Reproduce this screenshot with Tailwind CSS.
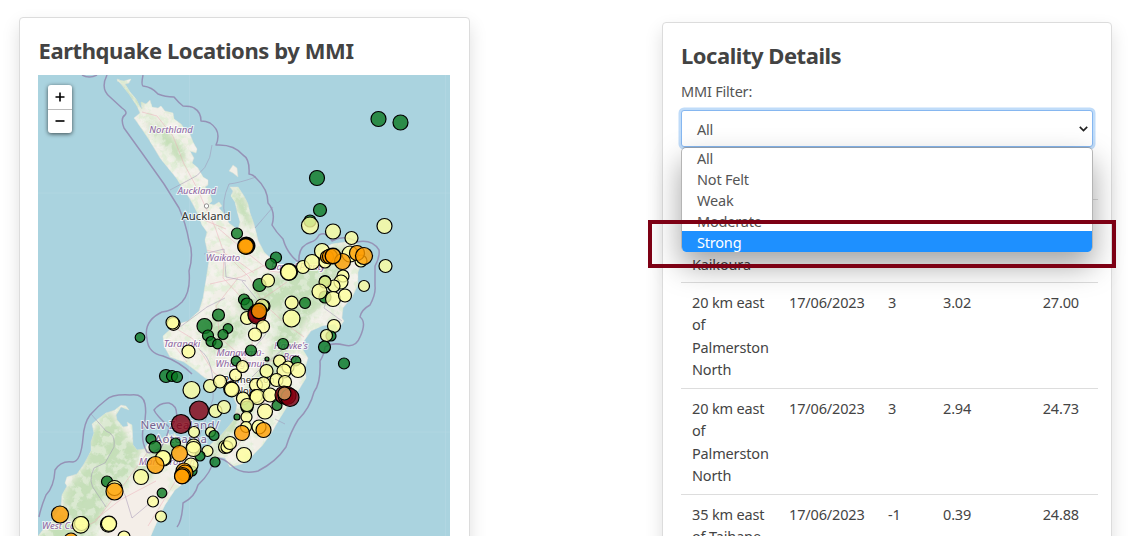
<!DOCTYPE html>
<html lang="en">
<head>
<meta charset="utf-8">
<title>Earthquake Dashboard</title>
<script src="https://cdn.jsdelivr.net/npm/@tailwindcss/browser@4"></script>
</head>
<body class="relative h-[536px] overflow-hidden bg-white font-['Noto_Sans',sans-serif] text-[#444]">
<main class="flex h-[536px] justify-between overflow-hidden pl-[19px] pr-[29px]">
  <section class="mt-[17px] h-[640px] w-[451px] shrink-0 rounded-[4px] border border-[#dcdcdc] bg-white px-[18px] shadow-[0_8px_18px_rgba(0,0,0,0.13)]">
    <h2 class="mt-[16px] h-[41px] whitespace-nowrap pl-[0.5px] text-[22px] font-bold leading-[32px] tracking-[-0.42px] text-[#434343]">Earthquake Locations by MMI</h2>
    <div class="relative h-[480px] w-[412px] overflow-hidden bg-[#aad3df]">
      <svg id="map" class="block h-[480px] w-[412px]" viewBox="38 75 412 480">
        <defs>
          <clipPath id="land"><use href="#north"/><use href="#south"/></clipPath>
          <filter id="soft" x="-20%" y="-20%" width="140%" height="140%"><feGaussianBlur stdDeviation="3"/></filter>
          <filter id="forest" x="0" y="0" width="100%" height="100%">
            <feTurbulence type="fractalNoise" baseFrequency="0.13" numOctaves="4" seed="8"/>
            <feColorMatrix values="0 0 0 0 .71  0 0 0 0 .85  0 0 0 0 .64  7 0 0 0 -3.3"/>
          </filter>
          <filter id="clearing" x="0" y="0" width="100%" height="100%">
            <feTurbulence type="fractalNoise" baseFrequency="0.11" numOctaves="4" seed="21"/>
            <feColorMatrix values="0 0 0 0 .945  0 0 0 0 .937  0 0 0 0 .91  7 0 0 0 -3.3"/>
          </filter>
        </defs>
        <rect x="38" y="75" width="412" height="480" fill="#aad3df"/>
        <path d="M189.5 75V536M38 193H450M445.500 75V536M38 432H450" stroke="#b5d9e4" stroke-width=".6"/>
        <g fill="#f1efe7" stroke="#d5dfd5" stroke-width=".5">
          <path id="north" d="M117 80L124 81L131 79L129 83L125 84L130 92L136 99L140 107L142 109L141 102L146 104L150 100L152 107L158 108L161 106L165 111L173 113L174 119L181 124L186 131L190 134L193 142L197 149L196 153L190 151L194 158L192 163L198 168L203 177L208 180L208 185L205 187L210 194L212 201L209 204L214 205L219 202L222 206L219 208L225 215L229 223L238 230L240 222L237 211L235 202L231 196L233 191L230 187L238 187L244 196L248 204L250 213L254 224L258 240L264 252L275 262L290 269L305 262L315 254L326 247L332 244L345 242L355 243L366 250L362 262L358 272L358 285L352 297L343 308L342 318L344 321L338 329L335 324L322 326L311 331L304 341L303 350L308 358L305 368L306 378L300 388L290 402L280 418L272 432L262 446L250 458L242 464L230 467L225 458L218 457L214 460L208 452L210 445L222 434L234 420L237 405L232 394L220 385L205 378L195 370L184 362L170 357L164 346L163 336L175 325L188 321L199 311L203 298L206 280L209 260L205 240L207 232L202 225L198 214L190 199L180 184L177 179L160 158L148 138L137 122L134 118L140 113L137 106L129 94L121 84Z"/>
          <path id="south" d="M121 405L115 410L106 413L98 419L92 424L94 433L91 442L91 451L84 464L77 474L67 477L65 483L67 486L62 495L61 507L52 521L43 530L38 536V560H144L150 538L156 524L165 505L175 490L188 480L195 470L199 455L190 445L179 439L174 433L173 440L168 433L165 441L159 436L151 440L144 449L137 450L133 445L132 425L127 422L128 426L123 427L117 420L116 415L121 407L129 410L126 406Z"/>
          <path d="M233 165l4 3l1 9l-5-4l-4-2zM117 79l3 1-2 2z"/>
        </g>
        <g clip-path="url(#land)">
          <rect x="38" y="75" width="412" height="480" filter="url(#forest)" opacity=".6"/>
          <g fill="#bfdcb2" filter="url(#soft)" opacity=".85">
            <path d="M122 82l24 24l-8 3l-19-22zM148 118l18 12l22 25l-8 10l-29-34zM232 188l12 7l10 33l-9-3-10-21z"/>
            <path d="M358 244l-18 28l-10 28l-23 20l-24 38l-14-2l11-50l-30 18l-15-20l28-25l23-4l29-23z"/>
            <path d="M215 315l29 5l2 15l-30 20l-16-15zM303 330l-23 45l-45 55l-23 33l-9-7l34-44l25-46z"/>
            <path d="M109 410l-18 23l-7 35l-17 18l-3 22l-24 28v24l50-20l17-36l28-33l6-20-18-20z"/>
            <path d="M190 442l-31 24l-14 17l-10-5l24-38z"/>
          </g>
          <rect x="38" y="75" width="412" height="480" filter="url(#clearing)" opacity=".4"/>
          <path fill="#f4eee8" filter="url(#soft)" d="M111 500l30-15l31-14-24 75h-45z"/>
          <g fill="none" stroke="#eba4b1" stroke-width=".65" opacity=".65">
            <path d="M142 112l15 4l16 20l11 28l13 24l8 18l10 21l9 26l-1 25l18 19l12 18l-1 34l-17 21l-14 17l3 24l19 3l-8 30"/>
            <path d="M218 228l28 24l24 19l21 3l29-13l29-9M224 252l25 25l14 26l24 22l17 12M206 250l25 6l23 17M210 284l31-7l28-14M172 326l21 13l21 34l27 16l23 4l22-18M255 304l32-22M270 390l-14 31l-22 29M198 446l-20 31l-30 49M150 449l-28 38l-26 34l-38 21M95 520l25-20l36-19"/>
            <path d="M204 220l22 9M238 278l-22 28l4 32l30 25l40-4M170 340l17 22"/>
          </g>
        </g>
        <g fill="none" stroke="#9183ad" stroke-width="1.500" opacity=".8" stroke-linejoin="round">
          <path d="M82 75q7 4 15 0M107 75q-7 14 3 22l12 11q6 4 3 7q-5 3-1 13l18 25l22 31l15 24q7 16 10 33q5 13 0 30q2 21-7 31q-9 9-20 10q-19 9-15 27q1 14 16 17q17 6 29 18"/>
          <path d="M143 75q-2 10 0 11q9 1 15 8q7 3 16 3q5 6 9 9q8 0 11 2q7 4 7 13q5 0 9 2q12 8 6 22q18-1 27 10q7 4 6 19q5 1 7 4q12 11 12 25q8 9 4 22q4 7 11 14q4 14 14 22h2q-1-15 12-19q5-1 8-7q8-4 13 6q12-7 25 1q15-3 22 8q1 7-4 16v20q1 8-5 19q-9 5-10 12q7 5 0 20q-4 11-16 8q-12-3-19 2q-1 8-5 14q1 22-6 31q-4 16-16 28q-7 11-12 27q-10 15-28 24q-17 4-27-6q-8-8-17-7q-2 14-16 27q-3 12-15 18q-1 18-6 24"/>
          <path d="M130 395q13-2 15 9q2 12-2 25q-2 13 4 23q4 3 14-5q7-11 8-20q-13-12-15-17q6-8 15-7q10 3 7 18M130 395q-18-1-24 5q-8 6-16 15q-6 8-7 23q-2 23-10 24q-12-2-18 8q-1 17-9 25q-5 12-7 22"/>
        </g>
        <g fill="none" stroke="#9b8db0" stroke-width=".8" opacity=".6">
          <path d="M170 190l17-9q23-9 25-36M225 215q-4-13 4-31q10-1 27-7M255 228l18-21M204 254l20-5l2 28l20 4M242 281l17 21l7 32l-12 14M91 414l15 17q10 3 8 16l-9 16l-11 5q-7 14 2 24l10 15M110 477q9 7 15 18l7 23l12-10l17-15M180 327l27-20l18-9M282 350l-20 17l-18 18M330 290l-6 18l18 13M275 419l10 5M200 350q15 10 13 49l-17 47"/>
        </g>
        <g font-family="Noto Sans, sans-serif" text-anchor="middle" stroke="#fff" stroke-opacity=".7" stroke-width="2" paint-order="stroke" fill="#8c63a0">
          <g font-size="9.500" font-style="italic">
            <text x="171" y="132.500">Northland</text>
            <text x="197" y="193.500">Auckland</text>
            <text x="223" y="260.500">Waikato</text>
            <text x="298" y="270">Bay of Plenty</text>
            <text x="182" y="347">Taranaki</text>
            <text x="240.500" y="356">Manawatū-</text>
            <text x="240" y="367">Whanganui</text>
            <text x="291" y="349">Hawke's</text>
            <text x="291" y="360">Bay</text>
            <text x="167" y="465">Marlborough</text>
            <text x="65" y="529">West Coast</text>
          </g>
          <g font-size="11.500" fill="#756390" letter-spacing=".4">
            <text x="180" y="429">New Zealand/</text>
            <text x="181" y="443">Aotearoa</text>
          </g>
          <g fill="#333">
            <text x="206" y="220" font-size="11.300">Auckland</text>
            <text x="249" y="383" font-size="9.500">Palmerston</text>
            <text x="249" y="394" font-size="9.500">North</text>
          </g>
        </g>
        <circle cx="206.500" cy="206" r="2.200" fill="#fff" stroke="#777" stroke-width=".8"/>
        <g id="quakes" stroke="#000" stroke-width="1.200"></g>
      </svg>
      <div class="absolute left-[10px] top-[10px] flex h-[48px] w-[24px] flex-col divide-y divide-[#bbb] rounded-[3px] bg-white text-black shadow-[0_1px_4px_rgba(0,0,0,0.65)]">
        <button class="flex flex-1 items-center justify-center" aria-label="Zoom in"><svg class="size-[10px]" viewBox="0 0 10 10"><path d="M5 .5v9M.5 5h9" stroke="#000" stroke-width="1.600"/></svg></button>
        <button class="flex flex-1 items-center justify-center" aria-label="Zoom out"><svg class="size-[10px]" viewBox="0 0 10 10"><path d="M.5 5h9" stroke="#000" stroke-width="1.600"/></svg></button>
      </div>
    </div>
  </section>

  <section class="mt-[22px] h-[640px] w-[450px] shrink-0 rounded-[4px] border border-[#dcdcdc] bg-white pl-[18px] pr-[12px] shadow-[0_8px_18px_rgba(0,0,0,0.13)]">
    <h2 class="mt-[16px] h-[33px] whitespace-nowrap text-[22px] font-bold leading-[32px] tracking-[-0.47px] text-[#434343]">Locality Details</h2>
    <div class="mt-[8px] h-[23px] text-[14.5px] leading-[22px] tracking-[-0.2px] text-[#555]">MMI Filter:</div>
    <div class="relative mt-[7px] h-[37px] w-[412px]">
      <div class="flex h-[37px] items-center justify-between rounded-[3px] border border-[#86b7f0] bg-white pl-[15px] pr-[4px] text-[14.5px] tracking-[-0.2px] text-[#555] shadow-[0_0_0_2.5px_#c0dcf9]">
        <span class="pt-[2px]">All</span>
        <svg class="h-[6px] w-[9px]" viewBox="0 0 9 6"><path d="M.8.8L4.500 4.500L8.200.8" fill="none" stroke="#222" stroke-width="1.700"/></svg>
      </div>
      <ul class="absolute left-0 top-[37px] z-10 h-[105px] w-[412px] overflow-hidden rounded-[5px] border border-b-0 border-[#b5b5b5] border-t-[#8d9bab] bg-white text-[14.5px] tracking-[-0.2px] text-[#555]">
        <li class="h-[21px] pl-[15px] leading-[20px]">All</li>
        <li class="h-[21px] pl-[15px] leading-[20px]">Not Felt</li>
        <li class="h-[21px] pl-[15px] leading-[20px]">Weak</li>
        <li class="h-[20px] pl-[15px] leading-[20px]">Moderate</li>
        <li class="h-[22px] bg-[#1e90ff] pl-[15px] leading-[22px] text-white">Strong</li>
      </ul>
      <div class="absolute left-0 top-[37px] z-[9] h-[105px] w-[412px] rounded-[5px] shadow-[0_14px_30px_rgba(0,0,0,0.36)]"></div>
    </div>
    <table class="mt-[52px] w-[417px] table-fixed border-collapse text-[14.5px] leading-[22.4px] tracking-[-0.16px] text-[#444]">
      <colgroup><col class="w-[96px]"><col class="w-[99px]"><col class="w-[56px]"><col class="w-[88px]"><col class="w-[78px]"></colgroup>
      <tbody class="align-top">
        <tr class="h-[83px] border-t border-[#ddd]"><td class="pl-[11px] pt-[53px]">Kaikoura</td><td></td><td></td><td></td><td></td></tr>
      </tbody>
    </table>
  </section>
</main>
<div class="pointer-events-none absolute left-[648px] top-[220px] z-20 h-[48px] w-[468px] border-4 border-[#7d0014]"></div>
<script>
// Quake markers: x, y, radius, colour, optional stroke width
const colors = {g: '#0b7922', y: '#ffff9f', o: '#ff9d00', d: '#850010', t: '#dba862'};
const quakes = `378.5 119 7.5 g,400.5 122.5 7.5 g,317 178 7.5 g,320 210 6.5 g,310 221 6 g,310 225.5 8.5 y,333 231.5 7.5 y,351.5 238 6.5 y,384.5 226 7.5 y,385.5 266 6.5 y,364 286 5.5 y,
237 233.5 5.5 g,246.3 245.7 8 o 2.4,245.6 246.4 7.8 o,276 257.5 5.5 g,271 264 5.5 g,259.5 285 6.5 g,268 280.5 6.5 y,303 267 6.5 y,289.3 271.7 8.2 y,288.7 272 8.2 y 1.4,312 262 7.5 y,322 251 7.5 y,325 262 6 y,327 257 6.5 o,330 256.5 7.5 o,350 254 8 y,342.5 261.5 8 o,333 256 7.8 o 1.4,361 261 6 y,357 253 7.5 o,364 256 8.5 o,
343 276 6 y,341 282 7 y,334 286 6 y,325 281 5.5 g,325 282 6 y,325 297 6 g,319.5 291.5 7.5 y,333 299 7.5 y,345 295.5 6.5 y,
244 299.5 5.5 g,247 304 6 g,291.7 302.7 6.5 y,305 303 5.5 g,291.5 318.5 8.5 y,247 318 6.5 y,264 306 6 g,262 306 7 y,257 313.5 9 d,257 315 9 d,259 311 7.7 o 1.4,263 326.5 6.5 y,255 334.5 6.5 y,334 326 6.5 y,331 336 5 g,326.5 335.5 6 y,324.5 347 6 g,283 344 5.5 g,251 350.5 5.5 g,344 363.5 5.5 g,
140 337.5 4.8 g,173.5 323.8 6.5 y,172.5 322.5 6.5 y,204.5 326 7.5 g,218.500 315 6 g,228 328.500 4.8 g,223 334.500 5 g,208 335.500 5.500 g,211 341.500 5 g,217.500 344 4.800 g,188.500 351.500 6.500 y,236 361 4.800 g,166 376 6.500 g,172 376 5.500 g,177 377 5.500 g,191.500 390 8.500 y,210 386 6.500 y,220 381.500 6.500 y,235.500 375 6 y,242.500 366.500 6 y,231 388.8 7.3 y,231.800 389.500 7.300 y,199 410.500 9.500 d,181 424 9.500 d,215.500 411 6.500 y,224 407 6.500 y,267 359 2 g,
279.500 361 6 y,296 361 4.800 g,288 367 6 y,284 371 7 y,298 370 7.500 y,266.500 371 6.500 y,276.500 380 6.500 y,285 382 6.500 y,256 385 6.500 y,263.500 383.500 6.500 y,243 398.500 6.500 y,256 396 6.5 y,257.500 397 7.500 y,270 395 7 y,247 407 6 g,247 405 6.500 y,277 405.500 5 g,265 411.500 7.500 y,284 395 9 d,287 395.500 9 d,290 397.500 9 d,284.500 393.500 6.500 t,237 417 3 g,246.500 417 5.500 y,246 427 5.500 y,242 433 7.500 o,259 427 7 y,263.500 430 7.500 o,
225 447 6.500 y,227 447 6 y,230 443 6.500 y,244 455 7.500 y,194 432 5.500 y,210.500 432 5 y,214 435.500 5 g,215 462 5 g,207.500 451 5.500 y,200 456 5 g,193.500 446 7 y,193.500 449 7.500 y,175.500 443 5 g,179.500 453.500 8 o,163.6 458.500 7.5 y,163 458 7.500 y,155.500 465 8.500 o,151 439 5 g,155 447 6 g,141 477 7.500 y,192 471 5 g,191 465 7 y,184 471 8 o,185 473 8 o,182.600 475.500 8 o,182 476.300 7.500 o,162 493 4.800 g,153 501.500 5.500 y,161 516.500 5.500 y,
107 481.500 5.500 g,114.500 488 7.500 y,114.500 491.500 8.500 o,60 514.500 8.500 o,81.5 523.5 7 y,80.7 524.800 8.300 y,108.300 524.300 7.800 y,109 523.800 7.600 y,71 540 7 o,124 537 6 y`;
const layer = document.getElementById('quakes');
quakes.split(',').forEach(item => {
  const [x, y, r, c, w] = item.trim().split(' ');
  const dot = document.createElementNS('http://www.w3.org/2000/svg', 'circle');
  dot.setAttribute('cx', x); dot.setAttribute('cy', y); dot.setAttribute('r', r);
  dot.setAttribute('fill', colors[c]); dot.setAttribute('fill-opacity', '.8');
  if (w) dot.setAttribute('stroke-width', w);
  layer.append(dot);
});
// Locality rows
const rows = [['20 km east<br>of<br>Palmerston<br>North', '3', '3.02', '27.00'], ['20 km east<br>of<br>Palmerston<br>North', '3', '2.94', '24.73'], ['35 km east<br>of Taihape', '-1', '0.39', '24.88']];
document.querySelector('tbody').insertAdjacentHTML('beforeend', rows.map(([place, mmi, mag, depth]) =>
  `<tr class="h-[106px] border-t border-[#ddd]"><td class="pl-[11px] pt-[8px]">${place}</td><td class="pl-[12px] pt-[8px]">17/06/2023</td><td class="pl-[12px] pt-[8px]">${mmi}</td><td class="pl-[11px] pt-[8px]">${mag}</td><td class="pr-[19px] pt-[8px] text-right">${depth}</td></tr>`).join(''));
</script>
</body>
</html>
